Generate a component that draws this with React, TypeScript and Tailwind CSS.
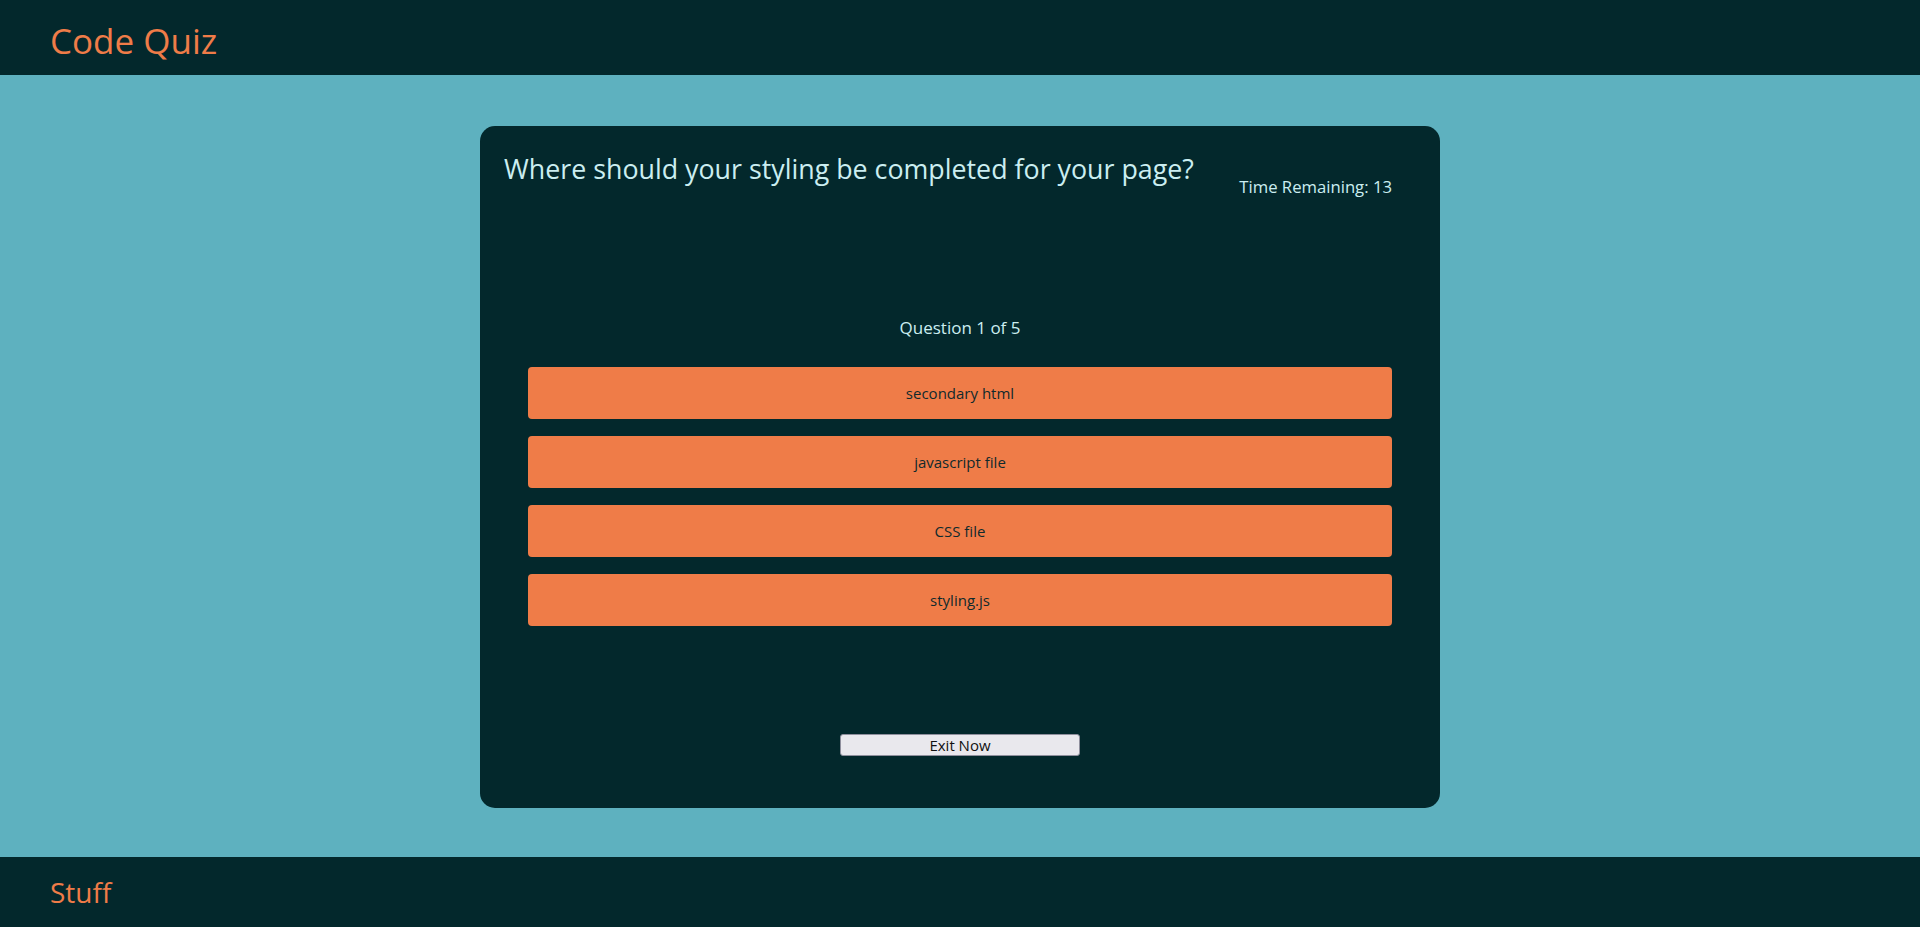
const answers = ["secondary html", "javascript file", "CSS file", "styling.js"];

export default function App() {
  return (
    <div className="flex min-h-[927px] flex-col bg-[#5eb1bf] font-['Open_Sans','Noto_Sans',sans-serif]">
      <header className="flex h-[75px] items-center bg-[#03282c] px-[50px] pt-[6px]">
        <h1 className="text-[35px] leading-[51px] text-[#ef7c48]">Code Quiz</h1>
      </header>

      <main className="flex h-[782px] items-start justify-center pt-[51px]">
        <section className="flex w-[960px] flex-col rounded-[15px] bg-[#03282c] px-6 pt-[24px] pb-[52px]">
          <div className="flex h-[74px] items-start justify-between">
            <h2 className="text-[26.8px] leading-[38px] text-[#cbeef1]">
              Where should your styling be completed for your page?
            </h2>
            <p className="mt-[23px] mr-6 text-[16.7px] leading-[27px] text-[#cbeef1]">Time Remaining: 13</p>
          </div>

          <p className="mt-[90px] text-center text-[17px] leading-[27px] text-[#cbeef1]">Question 1 of 5</p>

          <div className="mx-6 mt-[26px] flex flex-col gap-[17px]">
            {answers.map((a) => (
              <button
                key={a}
                className="h-[52px] rounded-[4px] bg-[#ef7c48] text-[15px] text-[#0f2a2c]"
              >
                {a}
              </button>
            ))}
          </div>

          <div className="mt-[108px] flex justify-center">
            <button className="h-[22px] w-[240px] rounded-[3px] border border-[#8f8f9d] bg-[#e9e8ed] text-[15px] leading-[20px] text-[#111]">
              Exit Now
            </button>
          </div>
        </section>
      </main>

      <footer className="flex h-[70px] items-center bg-[#03282c] px-[50px]">
        <p className="text-[28px] text-[#ef7c48]">Stuff</p>
      </footer>
    </div>
  );
}
